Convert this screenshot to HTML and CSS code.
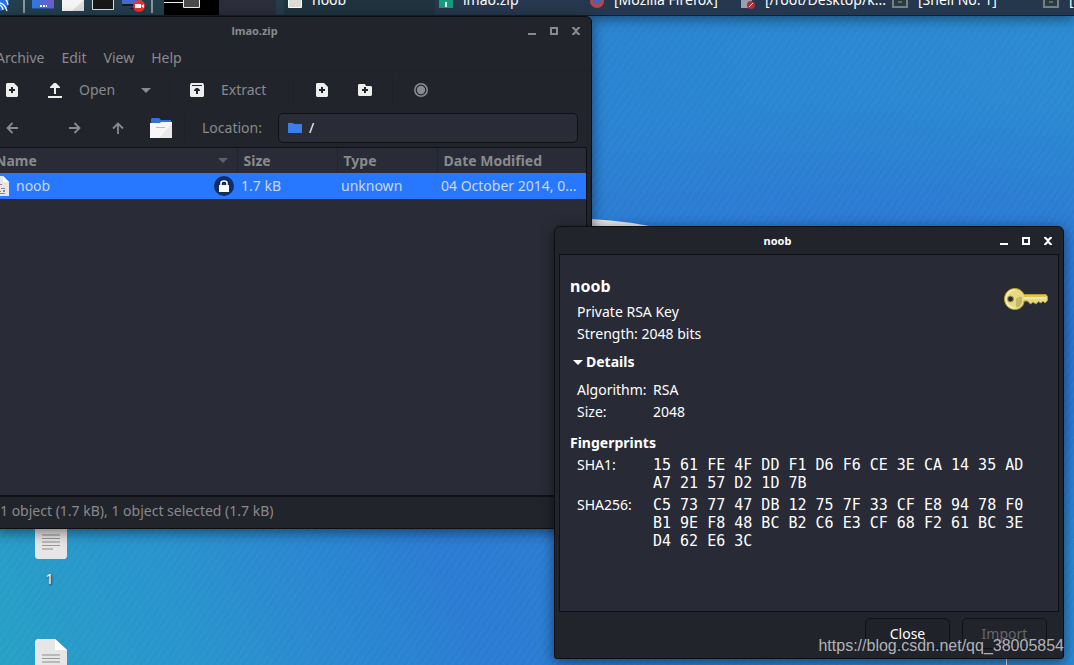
FILE: index.html
```html
<!DOCTYPE html>
<html lang="en">
<head>
<meta charset="utf-8">
<title>Desktop</title>
<link rel="stylesheet" href="styles.css">
</head>
<body>
<main class="desktop">
  <svg class="wallpaper-sheet" width="80" height="14" viewBox="0 0 80 14"><path d="M0 3Q40 5 76 14H0Z" fill="#e8e9eb"/></svg>
  <svg class="wallpaper-line" width="2" height="8" viewBox="0 0 2 8"><path d="M0 0h1v8h-1z" fill="#dce6ee"/></svg>

  <div class="desk-icon desk-icon-first">
    <svg width="32" height="42" viewBox="0 0 32 42"><path d="M2 0h18l12 11v29l-2 2H2l-2-2V2z" fill="#e6e6e6"/><path d="M20 0v11h12z" fill="#fff"/><path d="M7 17h18v2H7zM7 24h18v2H7z" fill="#b9b9b9"/><path d="M7 21h18v1H7zM7 28h18v1H7z" fill="#999"/><path d="M7 31h11v2H7z" fill="#b9b9b9"/></svg>
    <span>1</span>
  </div>
  <div class="desk-icon desk-icon-second">
    <svg width="32" height="42" viewBox="0 0 32 42"><path d="M2 0h18l12 11v29l-2 2H2l-2-2V2z" fill="#e6e6e6"/><path d="M20 0v11h12z" fill="#fff"/><path d="M7 15h18v2H7zM7 22h18v2H7z" fill="#b9b9b9"/><path d="M7 19h18v1H7zM7 26h18v1H7z" fill="#999"/></svg>
  </div>

  <nav class="panel">
    <div class="launchers">
      <svg width="12" height="26" viewBox="0 0 12 26"><path d="M0 0h8l1 13-2 8-7 3z" fill="#2377e8"/><path d="M0 16q5 1 7 8M0 18q3 2 3 5M1 12q6-2 7 6" fill="none" stroke="#fff" stroke-width="1.3"/></svg>
      <i class="panel-sep"></i>
      <svg width="22" height="26" viewBox="0 0 22 26"><defs><linearGradient id="lg"><stop stop-color="#2d7be2"/><stop offset="1" stop-color="#7558c2"/></linearGradient></defs><path d="M0 4h22v17H0z" fill="url(#lg)"/><path d="M0 21h22v1H0z" fill="#2456aa"/><path d="M8 18h2v2H8zM11 18h2v2h-2zM14 18h1v2h-1z" fill="#fff"/></svg>
      <svg width="22" height="26" viewBox="0 0 22 26"><path d="M0 4h22v20H0z" fill="#f5f5f5"/><path d="M22 13v11H10z" fill="#ddd"/></svg>
      <svg width="22" height="26" viewBox="0 0 22 26"><path d="M.5 4h21v18.500H.5z" fill="#181818" stroke="#e0e0e0"/></svg>
      <svg width="24" height="26" viewBox="0 0 24 26"><path d="M0 4h20v14H0z" fill="#4569cf"/><path d="M0 17h20v2H0zM8 21h10v1H8z" fill="#121b29"/><circle cx="17" cy="19" r="6" fill="#ee2e32"/><path d="M13 17h6v4h-6zM19 19l3-2v4z" fill="#fff"/></svg>
      <i class="panel-sep"></i>
    </div>
    <div class="pager"><span class="space space-active"><svg width="55" height="29" viewBox="0 0 55 29"><path d="M0 16.500h19.500V0M19.500 10V21.500h16V0" fill="none" stroke="#eee"/><path d="M20 12h15v9H20z" fill="#4b4b4b"/></svg></span><span class="space"></span></div>
    <div class="tasks">
      <button class="task"><svg width="14" height="20" viewBox="0 0 14 20"><path d="M.5 0h13v15.500H.5z" fill="#dcdcd2" stroke="#fff"/></svg><span>noob</span></button>
      <button class="task task-active"><svg width="14" height="20" viewBox="0 0 14 20"><path d="M0 0h14v16H0z" fill="#179b7d"/><path d="M6 10h2v5H6z" fill="#d9eee7"/></svg><span>lmao.zip</span></button>
      <button class="task task-min"><svg width="14" height="20" viewBox="0 0 14 20"><circle cx="7" cy="9" r="7" fill="#b64551"/><circle cx="7" cy="8" r="4" fill="#4067b4"/></svg><span>[Mozilla Firefox]</span></button>
      <button class="task task-min"><svg width="14" height="20" viewBox="0 0 14 20"><path d="M0 0h11v16H0z" fill="#9a9dab"/><circle cx="10" cy="13" r="4" fill="#a63140"/><path d="M8 15l4-4" stroke="#ddd"/></svg><span>[/root/Desktop/k...</span></button>
      <button class="task task-min"><svg width="16" height="20" viewBox="0 0 16 20"><path d="M1 1h14v14H1z" fill="#293b42" stroke="#777f84" stroke-width="2"/><path d="M6 10h4" stroke="#999"/></svg><span>[Shell No. 1]</span></button>
      <button class="task task-min"><svg width="16" height="20" viewBox="0 0 16 20"><path d="M1 1h14v14H1z" fill="#293b42" stroke="#777f84" stroke-width="2"/><path d="M6 10h4" stroke="#999"/></svg><span>[</span></button>
    </div>
  </nav>

  <section class="window archive">
    <header class="titlebar">
      <h1>lmao.zip</h1>
      <div class="controls">
        <button aria-label="Minimize"><svg width="8" height="8" viewBox="0 0 8 8"><path d="M0 6h8v2H0z"/></svg></button>
        <button aria-label="Maximize"><svg width="8" height="8" viewBox="0 0 8 8"><path fill-rule="evenodd" d="M0 0h8v8H0zM2 2v4h4V2z"/></svg></button>
        <button aria-label="Close window"><svg width="8" height="8" viewBox="0 0 8 8"><path d="M0 0h2l2 2 2-2h2v1L5 4l3 3v1H6L4 6 2 8H0V7l3-3-3-3z"/></svg></button>
      </div>
    </header>
    <nav class="menubar"><button>Archive</button><button>Edit</button><button>View</button><button>Help</button></nav>
    <div class="toolbar">
      <button class="tool" aria-label="New archive"><svg width="12" height="14" viewBox="0 0 12 14"><path fill-rule="evenodd" d="M1 0h7l4 4v9l-1 1H1l-1-1V1zM5 4v2H3v2h2v2h2V8h2V6H7V4z" fill="#eeeeec"/></svg></button>
      <button class="tool tool-open"><svg width="16" height="16" viewBox="0 0 16 16"><path d="M7 1h2l4 4v1H9v6H7V6H3V5zM1 14h14v2H1z" fill="#eeeeec"/></svg><span>Open</span></button>
      <button class="tool" aria-label="Open recent"><svg width="10" height="5" viewBox="0 0 10 5"><path d="M0 0h10L5 5z" fill="#898a8d"/></svg></button>
      <i class="sep"></i>
      <button class="tool tool-extract"><svg width="16" height="14" viewBox="0 0 16 14"><path fill-rule="evenodd" d="M2 0h12l1 2v11l-1 1H2l-1-1V2zM3 2v1h10V2zM7 5L5 7v1h2v3h2V8h2V7L9 5z" fill="#eeeeec"/></svg><span>Extract</span></button>
      <i class="sep"></i>
      <button class="tool tool-add" aria-label="Add files"><svg width="12" height="14" viewBox="0 0 12 14"><path fill-rule="evenodd" d="M1 0h7l4 4v9l-1 1H1l-1-1V1zM5 4v2H3v2h2v2h2V8h2V6H7V4z" fill="#eeeeec"/></svg></button>
      <button class="tool tool-add" aria-label="Add folder"><svg width="14" height="14" viewBox="0 0 14 14"><path fill-rule="evenodd" d="M1 1h6l1 2h5l1 1v8l-1 1H1l-1-1V2zM6 4v2H4v2h2v2h2V8h2V6H8V4z" fill="#eeeeec"/></svg></button>
      <i class="sep"></i>
      <button class="tool tool-add" aria-label="Stop"><svg width="14" height="14" viewBox="0 0 14 14"><circle cx="7" cy="7" r="6.200" fill="none" stroke="#898a8d" stroke-width="1.600"/><circle cx="7" cy="7" r="4.200" fill="#898a8d"/></svg></button>
    </div>
    <div class="toolbar">
      <button class="tool" aria-label="Back"><svg width="12" height="12" viewBox="0 0 12 12"><path d="M12 6H1.500M6.500 1L1.500 6l5 5" fill="none" stroke="#898a8d" stroke-width="1.800"/></svg></button>
      <button class="tool tool-forward" aria-label="Forward"><svg width="12" height="12" viewBox="0 0 12 12"><path d="M0 6h10.500M5.500 1l5 5-5 5" fill="none" stroke="#898a8d" stroke-width="1.800"/></svg></button>
      <button class="tool tool-up" aria-label="Up"><svg width="12" height="12" viewBox="0 0 12 12"><path d="M6 12V1.500M1 6.500l5-5 5 5" fill="none" stroke="#898a8d" stroke-width="1.800"/></svg></button>
      <button class="tool tool-up" aria-label="Home"><svg width="22" height="20" viewBox="0 0 22 20"><path d="M1 1l1-1h7l2 2h10v4H1z" fill="#3170df"/><path d="M0 5h10l1-1h11v16H0z" fill="#f7f7f7"/><path d="M22 6v14H9z" fill="#e8e8e8"/><path d="M6 9h9v1H6z" fill="#bbb"/></svg></button>
      <i class="sep"></i>
      <label class="location-label" for="location">Location:</label>
      <div class="location"><svg width="14" height="10" viewBox="0 0 14 10"><path d="M0 0h5l1 1h8v9H0z" fill="#3b7de9"/></svg><input id="location" type="text" value="/"></div>
    </div>
    <div class="listing">
      <table>
        <colgroup><col class="col-name"><col class="col-size"><col class="col-type"><col></colgroup>
        <thead><tr>
          <th><div class="cell"><span>Name</span><svg width="10" height="5" viewBox="0 0 10 5"><path d="M0 0h10L5 5z" fill="#5f6167"/></svg></div></th>
          <th>Size</th><th>Type</th><th>Date Modified</th>
        </tr></thead>
        <tbody><tr>
          <td><div class="cell"><svg width="16" height="20" viewBox="0 0 16 20"><path d="M1 0h9l6 6v14H1l-1-1V1z" fill="#e6e6e6"/><path d="M10 0v6h6z" fill="#fff"/><path d="M7 8h2v1H7zM8 12h4v1H8zM6 15h2v1H6zM10 14h2v2h-2zM7 17h5v1H7z" fill="#888"/></svg><span>noob</span><svg width="20" height="20" viewBox="0 0 20 20"><circle cx="10" cy="10" r="10" fill="#122e60"/><path d="M5 9h10v7H5z" fill="#fff"/><path d="M7 9V7q0-2 3-2t3 2v2" fill="none" stroke="#fff" stroke-width="1.600"/></svg></div></td>
          <td>1.7 kB</td><td>unknown</td><td>04 October 2014, 0...</td>
        </tr></tbody>
      </table>
    </div>
    <footer class="status">1 object (1.7 kB), 1 object selected (1.7 kB)</footer>
  </section>

  <section class="window dialog">
    <header class="titlebar">
      <h1>noob</h1>
      <div class="controls">
        <button aria-label="Minimize"><svg width="8" height="8" viewBox="0 0 8 8"><path d="M0 6h8v2H0z"/></svg></button>
        <button aria-label="Maximize"><svg width="8" height="8" viewBox="0 0 8 8"><path fill-rule="evenodd" d="M0 0h8v8H0zM2 2v4h4V2z"/></svg></button>
        <button aria-label="Close window"><svg width="8" height="8" viewBox="0 0 8 8"><path d="M0 0h2l2 2 2-2h2v1L5 4l3 3v1H6L4 6 2 8H0V7l3-3-3-3z"/></svg></button>
      </div>
    </header>
    <div class="key-panel">
      <div class="key-head">
        <div>
          <h2>noob</h2>
          <p>Private RSA Key</p>
          <p>Strength: 2048 bits</p>
        </div>
        <svg width="44" height="22" viewBox="0 0 44 22"><path d="M20 6.500h22l1.500 2v4L41 15l-2-2-2 2-2.500-1.500L32 16l-3-2-2.500 2-3-3H20c0 5-4 8.500-9 8.500C5 21.500.5 17 .5 11S5 .5 11 .5c4 0 7.500 2.500 9 6z" fill="#e6da83" stroke="#bd9d24"/><path d="M11 2c-5 0-9 4-9 9s4 9 9 9" fill="none" stroke="#f7f1b8" stroke-width="1.500"/><path d="M12 11q3-3 6-2v6l-3 4h-3z" fill="#c2b86d"/><path d="M20 8h22" stroke="#c8ae3e"/><path d="M20 10h22" stroke="#f4edae" stroke-width="1.500"/><circle cx="6.500" cy="11" r="3" fill="#282a35" stroke="#b99f38"/></svg>
      </div>
      <details open>
        <summary><svg width="10" height="5" viewBox="0 0 10 5"><path d="M0 0h10L5 5z" fill="#fff"/></svg><span>Details</span></summary>
        <dl class="facts"><dt>Algorithm:</dt><dd>RSA</dd><dt>Size:</dt><dd>2048</dd></dl>
        <h3>Fingerprints</h3>
        <dl class="facts prints">
          <dt>SHA1:</dt><dd>15 61 FE 4F DD F1 D6 F6 CE 3E CA 14 35 AD<br>A7 21 57 D2 1D 7B</dd>
          <dt>SHA256:</dt><dd>C5 73 77 47 DB 12 75 7F 33 CF E8 94 78 F0<br>B1 9E F8 48 BC B2 C6 E3 CF 68 F2 61 BC 3E<br>D4 62 E6 3C</dd>
        </dl>
      </details>
    </div>
    <footer class="actions"><button>Close</button><button disabled>Import</button></footer>
  </section>

  <div class="watermark">https://blog.csdn.net/qq_38005854</div>
</main>
</body>
</html>
```

FILE: styles.css
```css
* { box-sizing: border-box; }
body { margin: 0; font: 14px/22px "Noto Sans", sans-serif; color: #fff; }
button, input { font: inherit; color: inherit; background: none; border: 0; padding: 0; margin: 0; }
h1, h2, h3, p, dl, dd { margin: 0; }
svg { display: block; flex: none; }

.desktop {
  position: relative;
  height: 100vh;
  overflow: hidden;
  background:
    repeating-linear-gradient(125deg, rgba(255,255,255,.02) 0 3px, transparent 3px 6px),
    radial-gradient(ellipse at 86% 50%, rgba(43,110,206,.9) 0%, rgba(43,116,212,.75) 22%, rgba(43,124,212,0) 50%),
    linear-gradient(65deg, #26a0c6 0%, #2991ce 17%, #2a7bd3 36%, #2a84d2 65%, #2a8bd1 100%);
}
.wallpaper-sheet { position: absolute; left: 591px; top: 216px; }
.wallpaper-line { position: absolute; left: 1006px; top: 658px; }

.desk-icon { position: absolute; left: 35px; width: 32px; display: flex; flex-direction: column; align-items: center; gap: 9px; }
.desk-icon-first { top: 517px; }
.desk-icon-second { top: 639px; }
.desk-icon span { text-shadow: 1px 1px 2px #123; padding-right: 3px; }

/* Top panel */
.panel {
  position: absolute; left: 0; right: 0; top: -14px; height: 30px;
  display: flex; overflow: hidden;
  background: linear-gradient(90deg, #24404e, #243d4c 24%, #25384f 45%, #25374d);
  border-bottom: 1px solid #14202b;
  box-shadow: 0 2px 14px rgba(0,0,0,.5);
}
.launchers { width: 164px; display: flex; gap: 8px; flex: none; }
.launchers svg { margin-top: 1px; }
.panel-sep { width: 2px; margin: 2px 0; background: #8c979d; }
.launchers .panel-sep:first-of-type { margin-left: 3px; margin-right: -1px; }
.launchers .panel-sep:last-of-type { margin-left: -3px; }
.pager { display: flex; flex: none; margin-right: 8px; }
.space { width: 57px; background: #2b2e3a; }
.space-active { width: 55px; background: #000; }
.tasks { display: flex; flex: none; }
.task { width: 151px; padding: 0 4px 2px; display: flex; align-items: center; gap: 10px; background: #20343f; white-space: nowrap; }
.task svg { margin-top: 5px; }
.task-active { background: #27384e; }
.task-min { background: none; }

/* Windows */
.window { position: absolute; background: #22242c; border: 1px solid #0d0e12; border-radius: 6px 6px 3px 3px; box-shadow: 0 3px 14px rgba(0,0,0,.5); display: flex; flex-direction: column; }
.titlebar { height: 27px; display: flex; align-items: center; flex: none; }
.titlebar h1 { flex: 1; text-align: center; font-size: 11px; font-weight: 700; line-height: 20px; }
.controls { display: flex; gap: 14px; padding-right: 11px; }
.controls svg { fill: currentColor; }

.archive { left: -6px; top: 16px; width: 598px; height: 513px; color: #898a8d; }
.archive .titlebar h1 { padding-right: 14px; }
.menubar { height: 27px; display: flex; align-items: center; gap: 17px; padding: 2px 0 0 1px; border-bottom: 1px solid #1f2128; flex: none; }
.toolbar { height: 38px; display: flex; align-items: center; flex: none; }
.tool { width: 34px; height: 34px; display: flex; align-items: center; justify-content: center; gap: 16px; flex: none; }
.tool-open { width: 100px; justify-content: flex-start; padding-left: 18px; }
.tool-extract { width: 111px; justify-content: flex-start; padding-left: 13px; }
.tool-add { width: 43px; }
.tool-forward { margin-left: 29px; }
.tool-up { margin-left: 9px; }
.sep { width: 1px; height: 29px; margin: 0 6px; background: #1f2128; }
.location-label { margin-left: 11px; width: 76px; }
.location { flex: 1; height: 30px; margin-right: 13px; display: flex; align-items: center; gap: 7px; padding: 0 9px; border: 1px solid #101116; border-radius: 5px; background: #292b36; color: #fff; }
.location input { flex: 1; min-width: 0; outline: 0; }
.listing { flex: 1; margin-right: 4px; border: solid #101116; border-width: 1px 1px 2px 0; background: #292b36; }
table { width: 100%; table-layout: fixed; border-collapse: collapse; }
.col-name { width: 242px; }
.col-size, .col-type { width: 100px; }
th, td { text-align: left; white-space: nowrap; overflow: hidden; }
th { height: 25px; padding: 0 6px; font-weight: 700; border-right: 1px solid #22242c; }
th:first-child { padding-left: 0; padding-right: 9px; }
th:last-child { border: 0; }
td { height: 26px; padding: 0 4px; background: #2777ff; color: #c9d7f1; }
td:first-child { padding-left: 0; padding-right: 3px; }
td:first-child .cell { margin-left: -2px; }
.cell { display: flex; align-items: center; gap: 7px; }
.cell span { flex: 1; }
.status { height: 31px; padding: 3px 5px; flex: none; }

.dialog { left: 554px; top: 226px; width: 510px; height: 433px; }
.key-panel { flex: 1; margin: 0 4px; padding: 19px 10px 0 10px; border: 1px solid #0d0e12; background: #282a35; }
.key-head { display: flex; justify-content: space-between; align-items: flex-start; }
.key-head svg { margin-top: 14px; }
.key-head h2 { font-size: 16px; line-height: 24px; margin-bottom: 3px; }
.key-head p { padding-left: 7px; }
summary { display: flex; align-items: center; gap: 3px; padding-left: 3px; margin: 6px 0; font-weight: 700; list-style: none; }
.facts { display: grid; grid-template-columns: 76px 1fr; padding-left: 7px; }
h3 { font-size: 14px; line-height: 22px; margin: 9px 0 2px; }
.prints { row-gap: 4px; }
.prints dt { line-height: 18px; }
.prints dd { font: 15px/18px "DejaVu Sans Mono", monospace; white-space: nowrap; }
.actions { height: 46px; display: flex; justify-content: flex-end; gap: 12px; padding: 6px 16px 8px; flex: none; }
.actions button { width: 85px; height: 31px; border: 1px solid #101116; border-radius: 5px; background: #20222a; }
.actions button:disabled { color: #65676e; background: #22242c; }
.watermark { position: absolute; right: 10px; bottom: 8px; font: 16px/22px "Liberation Sans", sans-serif; color: rgba(215,218,222,.8); }
```
